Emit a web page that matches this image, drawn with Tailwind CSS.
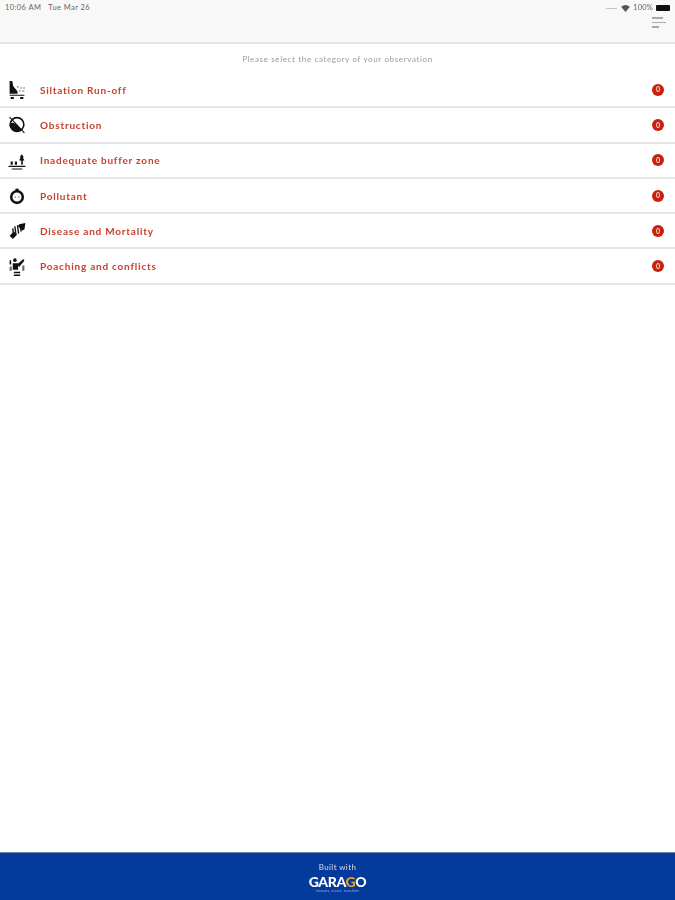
<!DOCTYPE html>
<html lang="en">
<head>
    <meta charset="UTF-8">
    <meta name="viewport" content="width=device-width, initial-scale=1.0">
    <title>Observation categories</title>
    <script src="https://cdn.jsdelivr.net/npm/@tailwindcss/browser@4"></script>
</head>
<body class="bg-white font-['Lato','Noto_Sans',sans-serif]">
    <div class="flex flex-col h-[900px] w-[675px] overflow-hidden blur-[0.45px]">

        <!-- Header -->
        <header class="h-[44px] shrink-0 bg-[#f8f8f8] border-b-2 border-[#e4e4e4] px-[5px] pt-[3px]">
            <div class="flex justify-between items-center h-[10px] text-[7.5px] tracking-[0.42px] text-[#666]">
                <div class="flex gap-[7px]">
                    <span>10:06 AM</span>
                    <span>Tue Mar 26</span>
                </div>
                <div class="flex items-center gap-[3px]">
                    <span class="w-[11px] h-[1px] mr-[1px] bg-[#c4c4c4]"></span>
                    <svg class="w-[9px] h-[7px]" viewBox="0 0 10 8"><path d="M0 2 Q5 -2 10 2 L5 8Z" fill="#555"/></svg>
                    <span class="tracking-[0.2px]">100%</span>
                    <span class="w-[14px] h-[6px] rounded-[1px] bg-[#111]"></span>
                </div>
            </div>
            <div class="flex justify-end pr-[4px] pt-[4px]">
                <div class="flex flex-col gap-[3px] w-[14px]">
                    <span class="h-[1.5px] w-[11px] bg-[#aaa]"></span>
                    <span class="h-[1.5px] w-[14px] bg-[#aaa]"></span>
                    <span class="h-[1.5px] w-[7px] bg-[#aaa]"></span>
                </div>
            </div>
        </header>

        <p class="h-[29px] shrink-0 flex items-center justify-center text-[8px] tracking-[0.64px] text-[#999]">Please select the category of your observation</p>

        <!-- Categories -->
        <ul class="shrink-0">
            <li class="flex items-center h-[35.3px] border-b-[2.5px] border-[#e6e6e6] pl-[8px] pr-[11px]">
                <svg class="w-[18px] h-[19px] mr-[14px]" viewBox="0 0 16 18" fill="#111"><path d="M1 1h2.500l1 5 4 5v2H1z"/><path d="M1 14h14v1H1zM2 16h3v2H2zM11 16h3v2h-3z"/><path d="M8 6h1.500v1H8zM11 7h1.500v1H11zM14 7h1.500v1H14zM10 10h1.500v1H10zM13 10h2v1h-2z" fill="#666"/></svg>
                <span class="pt-[1px] text-[10px] font-bold tracking-[0.78px] text-[#c8402c]">Siltation Run-off</span>
                <span class="ml-auto flex items-center justify-center w-[12px] h-[12px] rounded-full bg-[#c9210d] text-[7px] font-bold text-[#fbd9d4]">0</span>
            </li>
            <li class="flex items-center h-[35.3px] border-b-[2.5px] border-[#e6e6e6] pl-[8px] pr-[11px]">
                <svg class="w-[18px] h-[19px] mr-[14px]" viewBox="0 0 16 18" fill="#111"><circle cx="8" cy="9" r="6.500" fill="none" stroke="#111" stroke-width="1.500"/><path d="M2 7c4 0 8 3 10 7l-3 2c-4 0-7-3-8-6z"/><path d="M1 2l14 15" stroke="#111"/></svg>
                <span class="pt-[1px] text-[10px] font-bold tracking-[0.78px] text-[#c8402c]">Obstruction</span>
                <span class="ml-auto flex items-center justify-center w-[12px] h-[12px] rounded-full bg-[#c9210d] text-[7px] font-bold text-[#fbd9d4]">0</span>
            </li>
            <li class="flex items-center h-[35.3px] border-b-[2.5px] border-[#e6e6e6] pl-[8px] pr-[11px]">
                <svg class="w-[18px] h-[19px] mr-[14px]" viewBox="0 0 16 18" fill="#111"><path d="M0 14h16v1.200H0zM3 16.500h10v1H3z"/><path d="M2 10h2v3H2zM6 10h2v3H6z"/><path d="M12.500 3l2 3h-1l1.500 3h-1.500v4h-1.500V9H10l1.500-3h-1z"/></svg>
                <span class="pt-[1px] text-[10px] font-bold tracking-[0.78px] text-[#c8402c]">Inadequate buffer zone</span>
                <span class="ml-auto flex items-center justify-center w-[12px] h-[12px] rounded-full bg-[#c9210d] text-[7px] font-bold text-[#fbd9d4]">0</span>
            </li>
            <li class="flex items-center h-[35.3px] border-b-[2.5px] border-[#e6e6e6] pl-[8px] pr-[11px]">
                <svg class="w-[18px] h-[19px] mr-[14px]" viewBox="0 0 16 18" fill="none"><circle cx="8" cy="10.500" r="5.500" stroke="#111" stroke-width="2.400"/><path d="M6.500 2.500h3v2.500h-3z" fill="#111"/><path d="M5.500 10.500h1.500M9 10.500h1.500" stroke="#777"/></svg>
                <span class="pt-[1px] text-[10px] font-bold tracking-[0.78px] text-[#c8402c]">Pollutant</span>
                <span class="ml-auto flex items-center justify-center w-[12px] h-[12px] rounded-full bg-[#c9210d] text-[7px] font-bold text-[#fbd9d4]">0</span>
            </li>
            <li class="flex items-center h-[35.3px] border-b-[2.5px] border-[#e6e6e6] pl-[8px] pr-[11px]">
                <svg class="w-[18px] h-[19px] mr-[14px]" viewBox="0 0 16 18" fill="#111"><path d="M10 3l6-1-1 6-2 1-4-4z"/><path d="M1 14l4-4 3 3-4 4z"/><path d="M6 5l1 8M8.500 4l1 8M4 7l1 8M11 5l1 5" stroke="#111" stroke-width="1.300"/></svg>
                <span class="pt-[1px] text-[10px] font-bold tracking-[0.78px] text-[#c8402c]">Disease and Mortality</span>
                <span class="ml-auto flex items-center justify-center w-[12px] h-[12px] rounded-full bg-[#c9210d] text-[7px] font-bold text-[#fbd9d4]">0</span>
            </li>
            <li class="flex items-center h-[35.3px] border-b-[2.5px] border-[#e6e6e6] pl-[8px] pr-[11px]">
                <svg class="w-[18px] h-[19px] mr-[14px]" viewBox="0 0 16 18" fill="#111"><circle cx="6" cy="3" r="1.700"/><path d="M1 3h1.500v4H1zM4 6h5v6H4z"/><path d="M8 7l6-5 1 1.500-5 6z"/><path d="M5 14h6v1.500H5zM5 16.500h6V18H5z"/><path d="M1 9h2v4H1zM13 8h2v5h-2z" fill="#666"/></svg>
                <span class="pt-[1px] text-[10px] font-bold tracking-[0.78px] text-[#c8402c]">Poaching and conflicts</span>
                <span class="ml-auto flex items-center justify-center w-[12px] h-[12px] rounded-full bg-[#c9210d] text-[7px] font-bold text-[#fbd9d4]">0</span>
            </li>
        </ul>

        <!-- Footer -->
        <footer class="mt-auto h-[48px] shrink-0 bg-[#043a9b] border-t border-[#6d86bd] flex flex-col items-center pt-[9px]">
            <span class="text-[8px] leading-[10px] tracking-[0.4px] text-[#d5dcee]">Built with</span>
            <span class="mt-[3px] h-[13px] text-[14px] leading-[13px] font-black tracking-[-0.4px] text-white">GARA<span class="text-[#e8a02c]">G</span>O</span>
            <span class="mt-[1px] text-[3px] leading-[4px] tracking-[0.3px] text-[#a9b9df]">innovate. create. transform</span>
        </footer>
    </div>
</body>
</html>
